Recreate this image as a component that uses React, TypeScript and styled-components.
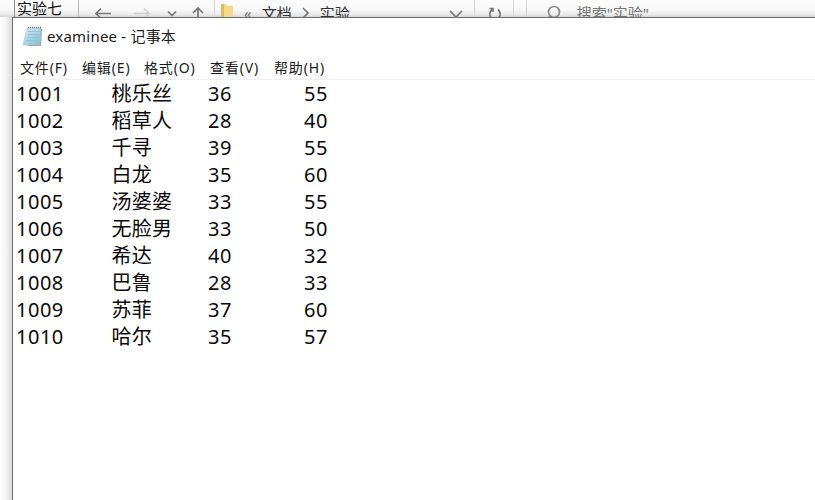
import React from "react";
import styled, { createGlobalStyle } from "styled-components";

const Global = createGlobalStyle`
  html, body { margin: 0; padding: 0; background: #fff; }
  body { font-family: "Noto Sans", "Noto Sans CJK SC", sans-serif; }
`;

const Desktop = styled.div`
  width: 815px;
  height: 500px;
  overflow: hidden;
  display: grid;
  grid-template-columns: 12px 1fr;
  grid-template-rows: 17px 1fr;
`;

const ExplorerBar = styled.div`
  grid-column: 1 / 3;
  height: 17px;
  overflow: hidden;
  display: flex;
  align-items: flex-start;
  background: linear-gradient(#fcfcfc 0%, #f9f9f9 55%, #e8e8e8 88%, #d2d2d2 100%);
`;

const TabLabel = styled.div`
  width: 65px;
  margin-left: 14px;
  height: 17px;
  padding-left: 2px;
  box-sizing: border-box;
  color: #111;
  font-size: 15px;
  line-height: 17px;
  border-left: 1px solid #8c8c8c;
  border-right: 1px solid #b5b5b5;
  flex: none;
`;

const Divider = styled.div<{ $left: number }>`
  width: 1px;
  height: 17px;
  background: #d4d4d4;
  margin-left: ${(p) => p.$left}px;
  flex: none;
`;

const NavIcon = styled.svg<{ $left: number }>`
  width: 16px;
  height: 16px;
  margin: 5px 0 0 ${(p) => p.$left}px;
  flex: none;
  fill: none;
  stroke-width: 1.7;
`;

const FolderIcon = styled.svg`
  width: 14px;
  height: 16px;
  margin: 3px 0 0 5px;
  flex: none;
`;

const Crumb = styled.span<{ $left: number; $dark?: boolean }>`
  margin-left: ${(p) => p.$left}px;
  flex: none;
  margin-top: 3px;
  color: ${(p) => (p.$dark ? "#333" : "#777")};
  font-size: 15px;
  line-height: 20px;
`;

const SideStrip = styled.div`
  background: linear-gradient(90deg, #fdfdfd 0%, #f5f5f5 45%, #dcdcdc 100%);
`;

const Notepad = styled.main`
  background: #fff;
  border-left: 1px solid #6e6e6e;
  border-top: 1px solid #6e6e6e;
  display: flex;
  flex-direction: column;
  min-height: 0;
`;

const TitleBar = styled.header`
  height: 36px;
  display: flex;
  align-items: center;
  padding-left: 9px;
  box-sizing: border-box;
  flex: none;
`;

const AppIcon = styled.svg`
  width: 22px;
  height: 22px;
  flex: none;
`;

const TitleText = styled.span`
  margin-left: 3px;
  font-size: 15px;
  color: #1a1a1a;
  line-height: 20px;
  letter-spacing: 0.2px;
`;

const MenuBar = styled.nav`
  height: 25px;
  display: flex;
  align-items: center;
  flex: none;
  border-bottom: 1px solid #f0f0f0;
  font-size: 14px;
  color: #1a1a1a;
`;

const MenuItem = styled.span<{ $w: number }>`
  width: ${(p) => p.$w}px;
  flex: none;
  white-space: nowrap;
  letter-spacing: 0.85px;
  &:first-child { margin-left: 7px; }
`;

const Editor = styled.div`
  padding: 0 0 0 3px;
  font-size: 20px;
  color: #0a0a0a;
`;

const Row = styled.div`
  display: grid;
  grid-template-columns: 95.5px 96.5px 96px 1fr;
  height: 27px;
  line-height: 27px;
  letter-spacing: 0.5px;
`;

const Name = styled.span`
  letter-spacing: 0.2px;
`;

const rows: [string, string, string, string][] = [
  ["1001", "桃乐丝", "36", "55"],
  ["1002", "稻草人", "28", "40"],
  ["1003", "千寻", "39", "55"],
  ["1004", "白龙", "35", "60"],
  ["1005", "汤婆婆", "33", "55"],
  ["1006", "无脸男", "33", "50"],
  ["1007", "希达", "40", "32"],
  ["1008", "巴鲁", "28", "33"],
  ["1009", "苏菲", "37", "60"],
  ["1010", "哈尔", "35", "57"],
];

const menus: [string, number][] = [
  ["文件(F)", 62],
  ["编辑(E)", 62],
  ["格式(O)", 66],
  ["查看(V)", 64],
  ["帮助(H)", 64],
];

export default function App() {
  return (
    <Desktop>
      <Global />
      <ExplorerBar>
        <TabLabel>实验七</TabLabel>
        <NavIcon $left={16} viewBox="0 0 16 16" stroke="#777">
          <path d="M16 8.5H1M6 3.5l-5 5 5 5" />
        </NavIcon>
        <NavIcon $left={23} viewBox="0 0 16 16" stroke="#d0d0d0">
          <path d="M0 8.5h15M10 3.5l5 5-5 5" />
        </NavIcon>
        <NavIcon $left={14} viewBox="0 0 16 16" stroke="#777">
          <path d="M4 6.5l4 4 4-4" />
        </NavIcon>
        <NavIcon $left={10} viewBox="0 0 16 16" stroke="#777">
          <path d="M8 16V3M3 8l5-5 5 5" />
        </NavIcon>
        <Divider $left={8} />
        <FolderIcon viewBox="0 0 14 16">
          <path d="M1 1h5l2 2h5v13H1z" fill="#f5d98c" />
          <path d="M1 1h3v15H1z" fill="#e6bb55" />
        </FolderIcon>
        <Crumb $left={10}>«</Crumb>
        <Crumb $left={10} $dark>文档</Crumb>
        <NavIcon $left={5} viewBox="0 0 16 16" stroke="#777">
          <path d="M6 3l5 5-5 5" />
        </NavIcon>
        <Crumb $left={7} $dark>实验</Crumb>
        <NavIcon $left={98} viewBox="0 0 16 16" stroke="#777">
          <path d="M2 6l6 6 6-6" />
        </NavIcon>
        <Divider $left={10} />
        <NavIcon $left={12} viewBox="0 0 16 16" stroke="#777">
          <path d="M5 4.5a6 6 0 0 0 3 10.5M11 4.5a6 6 0 0 1-3 10.5M2.5 3.5H6V7" />
        </NavIcon>
        <Divider $left={10} />
        <Divider $left={12} />
        <NavIcon $left={18} viewBox="0 0 16 16" stroke="#888">
          <circle cx="9" cy="7" r="5.5" />
          <path d="M5 11 1 15.5" />
        </NavIcon>
        <Crumb $left={16}>搜索"实验"</Crumb>
      </ExplorerBar>
      <SideStrip />
      <Notepad>
        <TitleBar>
          <AppIcon viewBox="0 0 22 22">
            <defs>
              <linearGradient id="pad" x1="0" y1="0" x2="1" y2="1">
                <stop offset="0" stopColor="#d8eef6" />
                <stop offset="1" stopColor="#7fbdd6" />
              </linearGradient>
            </defs>
            <path d="M6 4h14l-1 17H6z" fill="#a89a7c" />
            <path d="M5 3h14l-1 17H1z" fill="url(#pad)" stroke="#9cc4d2" strokeWidth="0.6" />
            <path d="M6 6.5h12M5.7 9.5h12M5.2 12.5h12M4.7 15.5h12" stroke="#8cbccf" strokeWidth="0.8" />
            <path d="M6 2.5h13" stroke="#777" strokeWidth="1.6" strokeDasharray="1 1" />
          </AppIcon>
          <TitleText>examinee - 记事本</TitleText>
        </TitleBar>
        <MenuBar>
          {menus.map(([label, w]) => (
            <MenuItem key={label} $w={w}>{label}</MenuItem>
          ))}
        </MenuBar>
        <Editor>
          {rows.map(([id, name, a, b]) => (
            <Row key={id}>
              <span>{id}</span>
              <Name>{name}</Name>
              <span>{a}</span>
              <span>{b}</span>
            </Row>
          ))}
        </Editor>
      </Notepad>
    </Desktop>
  );
}
